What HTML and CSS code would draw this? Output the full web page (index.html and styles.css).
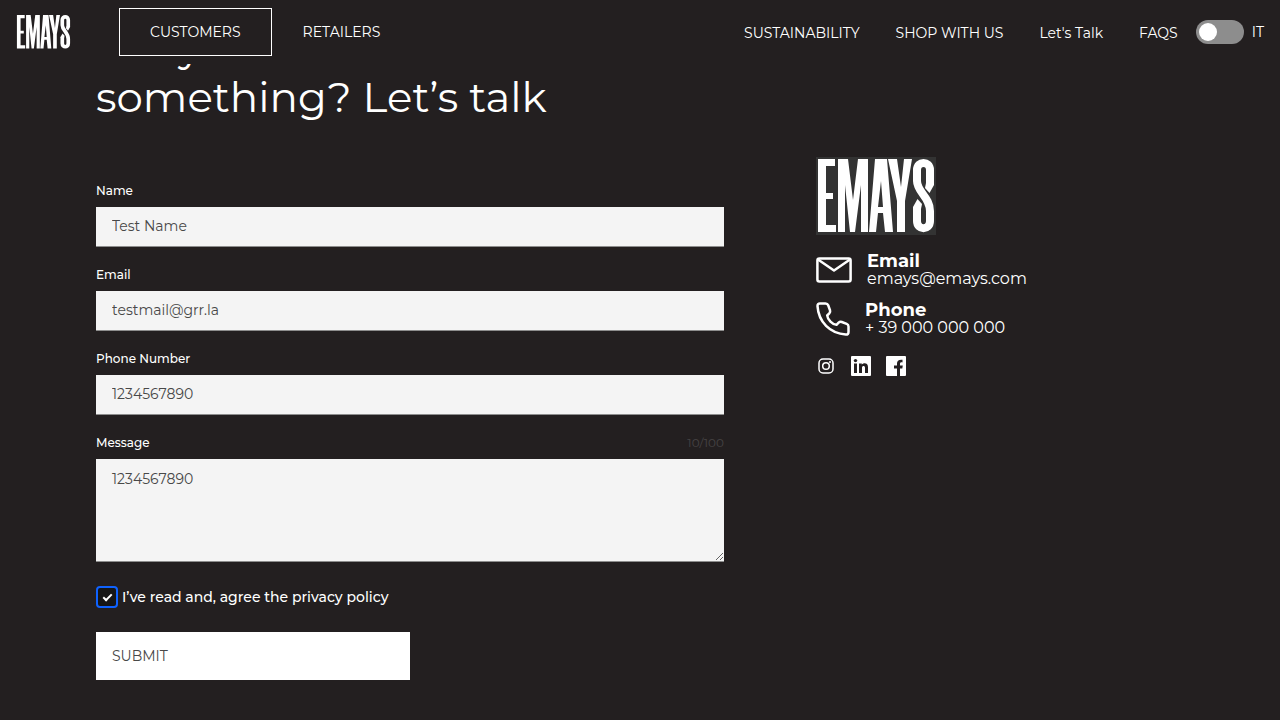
FILE: index.html
```html
<!DOCTYPE html>
<html lang="en">
<head>
<meta charset="utf-8">
<meta name="viewport" content="width=device-width, initial-scale=1">
<title>EMAYS</title>
<link rel="stylesheet" href="styles.css">
</head>
<body>
<svg class="symbols" aria-hidden="true">
  <symbol id="brand" viewBox="0 0 120 78">
    <g fill="currentColor">
      <path d="M2 2H19V9H10V36H17V42H10V68H20V75H2Z"/>
      <path d="M22 2H32L37 43L42 2H52V75H45V28L39 75H34L29 28V75H22Z"/>
      <path fill-rule="evenodd" d="M59 2H71L77 75H69L67 56H62L60 75H53ZM65 24L62 50H67Z"/>
      <path d="M72 2H81L85 30L88 2H96L89 44V75H81V44Z"/>
      <path d="M110 26H118V28L113.500 36L109 31Z"/>
      <path d="M97 52V50L101.500 42L106 47L105 52Z"/>
    </g>
    <path d="M114 27V13C114 3.500 101 3.500 101 13V24C101 35 114 40 114 54V64C114 73.500 101 73.500 101 64V51" fill="none" stroke="currentColor" stroke-width="8"/>
  </symbol>
</svg>

<header class="topbar">
  <a class="topbar-logo" href="#" aria-label="EMAYS home"><svg><use href="#brand"/></svg></a>
  <nav class="audience" aria-label="Audience">
    <a class="audience-link audience-link-active" href="#">CUSTOMERS</a>
    <a class="audience-link" href="#">RETAILERS</a>
  </nav>
  <nav class="pages" aria-label="Pages">
    <a href="#">SUSTAINABILITY</a>
    <a href="#">SHOP WITH US</a>
    <a href="#">Let's Talk</a>
    <a href="#">FAQS</a>
  </nav>
  <label class="language"><input class="switch" type="checkbox">IT</label>
</header>

<main class="contact">
  <section class="contact-main">
    <h1 class="title">Are you in need of<br>something? Let’s talk</h1>
    <form class="form">
      <div class="field">
        <label for="name">Name</label>
        <input class="control" id="name" type="text" value="Test Name">
      </div>
      <div class="field">
        <label for="email">Email</label>
        <input class="control" id="email" type="email" value="testmail@grr.la">
      </div>
      <div class="field">
        <label for="phone">Phone Number</label>
        <input class="control" id="phone" type="tel" value="1234567890">
      </div>
      <div class="field">
        <div class="field-head"><label for="message">Message</label><span class="counter">10/100</span></div>
        <textarea class="control control-area" id="message" maxlength="100">1234567890</textarea>
      </div>
      <label class="consent"><input class="tick" type="checkbox" checked>I’ve read and, agree the privacy policy</label>
      <button class="submit" type="button">SUBMIT</button>
    </form>
  </section>

  <aside class="details">
    <div class="details-logo"><svg role="img" aria-label="EMAYS"><use href="#brand"/></svg></div>
    <div class="detail">
      <svg class="icon-mail" viewBox="0 0 36 26" aria-hidden="true"><rect x="1.4" y="1.4" width="33.2" height="23.2" rx="2" /><path d="M2 2.5L18 13.5L34 2.5"/></svg>
      <div><strong>Email</strong><a href="#">emays@emays.com</a></div>
    </div>
    <div class="detail">
      <svg class="icon-phone" viewBox="0 0 34 34" aria-hidden="true"><path d="M4 1.5H9.500Q11.500 1.500 12.200 3.300L14 8.200Q14.600 10 13.300 11.400L11.200 13.500C11.500 17.500 16.500 22.500 20.500 22.800L22.600 20.700Q24 19.400 25.800 20L30.700 21.900Q32.500 22.600 32.500 24.500V30Q32.500 32.700 29.800 32.500C14 31.500 2.500 20 1.500 4.200Q1.400 1.500 4 1.500Z"/></svg>
      <div><strong>Phone</strong><a href="#">+ 39 000 000 000</a></div>
    </div>
    <div class="social">
      <a href="#" aria-label="Instagram"><svg viewBox="0 0 20 20"><g fill="none" stroke="currentColor" stroke-width="1.500"><rect x="3" y="3" width="14" height="14" rx="4"/><circle cx="10" cy="10" r="3.300"/></g><circle cx="14" cy="6" r="1" fill="currentColor"/></svg></a>
      <a href="#" aria-label="LinkedIn"><svg viewBox="0 0 20 20"><rect width="20" height="20" rx="1" fill="currentColor"/><g fill="#231f20"><circle cx="4.500" cy="4.600" r="1.700"/><rect x="3" y="7.500" width="3" height="9.500"/><path d="M8 7.500H10.800V8.800C12 6.700 17 6.400 17 11V17H14V11.800C14 9.200 11 9.300 11 11.800V17H8Z"/></g></svg></a>
      <a href="#" aria-label="Facebook"><svg viewBox="0 0 20 20"><rect width="20" height="20" rx="1" fill="currentColor"/><path fill="#231f20" d="M11 20V12.400H8V9.400H11V7.500C11 4.500 12.800 3.300 16.500 3.700V6.400C14.500 6.200 14 6.700 14 8V9.400H16.800L16.300 12.400H14V20Z"/></svg></a>
    </div>
  </aside>
</main>
</body>
</html>
```

FILE: styles.css
```css
* { box-sizing: border-box; }

body {
  margin: 0;
  background: #231f20;
  color: #fff;
  font-family: Montserrat, Inter, sans-serif;
  font-size: 14px;
}

a { color: inherit; text-decoration: none; }

.symbols { display: none; }

.topbar {
  position: fixed;
  top: 0;
  left: 0;
  right: 0;
  z-index: 1;
  display: flex;
  align-items: center;
  height: 64px;
  padding: 0 16px;
  background: #231f20;
}

.topbar-logo { margin-right: 48px; }
.topbar-logo svg { display: block; width: 55px; height: 36px; }

.audience { display: flex; }

.audience-link {
  padding: 0 30px;
  border: 1px solid transparent;
  line-height: 46px;
}

.audience-link-active { border-color: #fff; }

.pages {
  display: flex;
  gap: 36px;
  margin-left: auto;
  padding-top: 2px;
}

.language {
  display: flex;
  align-items: center;
  gap: 8px;
  margin-left: 18px;
}

.switch {
  appearance: none;
  display: flex;
  align-items: center;
  width: 48px;
  height: 24px;
  margin: 0;
  padding: 3px;
  border-radius: 12px;
  background: #8d8d8d;
}

.switch::before {
  content: "";
  width: 18px;
  height: 18px;
  border-radius: 50%;
  background: #fff;
}

.switch:checked { justify-content: flex-end; }

.contact {
  display: grid;
  grid-template-columns: 157fr 92fr;
  column-gap: 92px;
  padding: 22px 96px 40px;
}

.title {
  margin: 0 0 61px;
  font-size: 42px;
  font-weight: 400;
  line-height: 50px;
}

.form { display: flex; flex-direction: column; }

.field {
  display: flex;
  flex-direction: column;
  gap: 8px;
  margin-bottom: 20px;
  font-size: 12px;
  font-weight: 500;
  line-height: 16px;
}

.field-head { display: flex; justify-content: space-between; }

.counter { color: #464344; font-weight: 400; }

.control {
  width: 100%;
  height: 40px;
  padding: 0 16px 2px;
  border: 0;
  border-bottom: 1px solid #8d8d8d;
  border-radius: 0;
  background: #f4f4f4;
  color: #484848;
  font-family: inherit;
  font-size: 14px;
  font-weight: 400;
}

.control-area {
  height: 103px;
  padding: 11px 16px;
  line-height: 18px;
  resize: vertical;
}

.consent {
  display: flex;
  align-items: center;
  gap: 4px;
  margin: 4px 0 24px;
  font-weight: 500;
}

.tick {
  appearance: none;
  display: grid;
  place-items: center;
  width: 22px;
  height: 22px;
  margin: 0;
  border: 2px solid #0f62fe;
  border-radius: 4px;
  background: #161616;
}

.tick:checked::before {
  content: "";
  box-sizing: border-box;
  width: 9px;
  height: 5px;
  border: solid #fff;
  border-width: 0 0 2px 2px;
  transform: translateY(-1px) rotate(-45deg);
}

.submit {
  width: 50%;
  height: 48px;
  padding: 0 16px;
  border: 0;
  background: #fff;
  color: #484848;
  font-family: inherit;
  font-size: 14px;
  font-weight: 400;
  text-align: left;
}

.details { padding-top: 135px; }

.details-logo {
  width: 120px;
  height: 78px;
  background: #333;
}

.details-logo svg { display: block; width: 120px; height: 78px; }

.detail {
  display: flex;
  align-items: center;
  gap: 15px;
  margin-top: 15px;
  font-size: 16px;
  line-height: 17px;
}

.details-logo + .detail { margin-top: 18px; }
.detail strong, .detail a { display: block; }
.detail strong { font-size: 18px; }

.icon-mail, .icon-phone {
  fill: none;
  stroke: #fff;
  stroke-width: 2.500;
  stroke-linejoin: round;
}

.icon-mail { width: 36px; height: 26px; }
.icon-phone { width: 34px; height: 34px; }

.social { display: flex; gap: 15px; margin-top: 20px; }
.social svg { display: block; width: 20px; height: 20px; }
```
